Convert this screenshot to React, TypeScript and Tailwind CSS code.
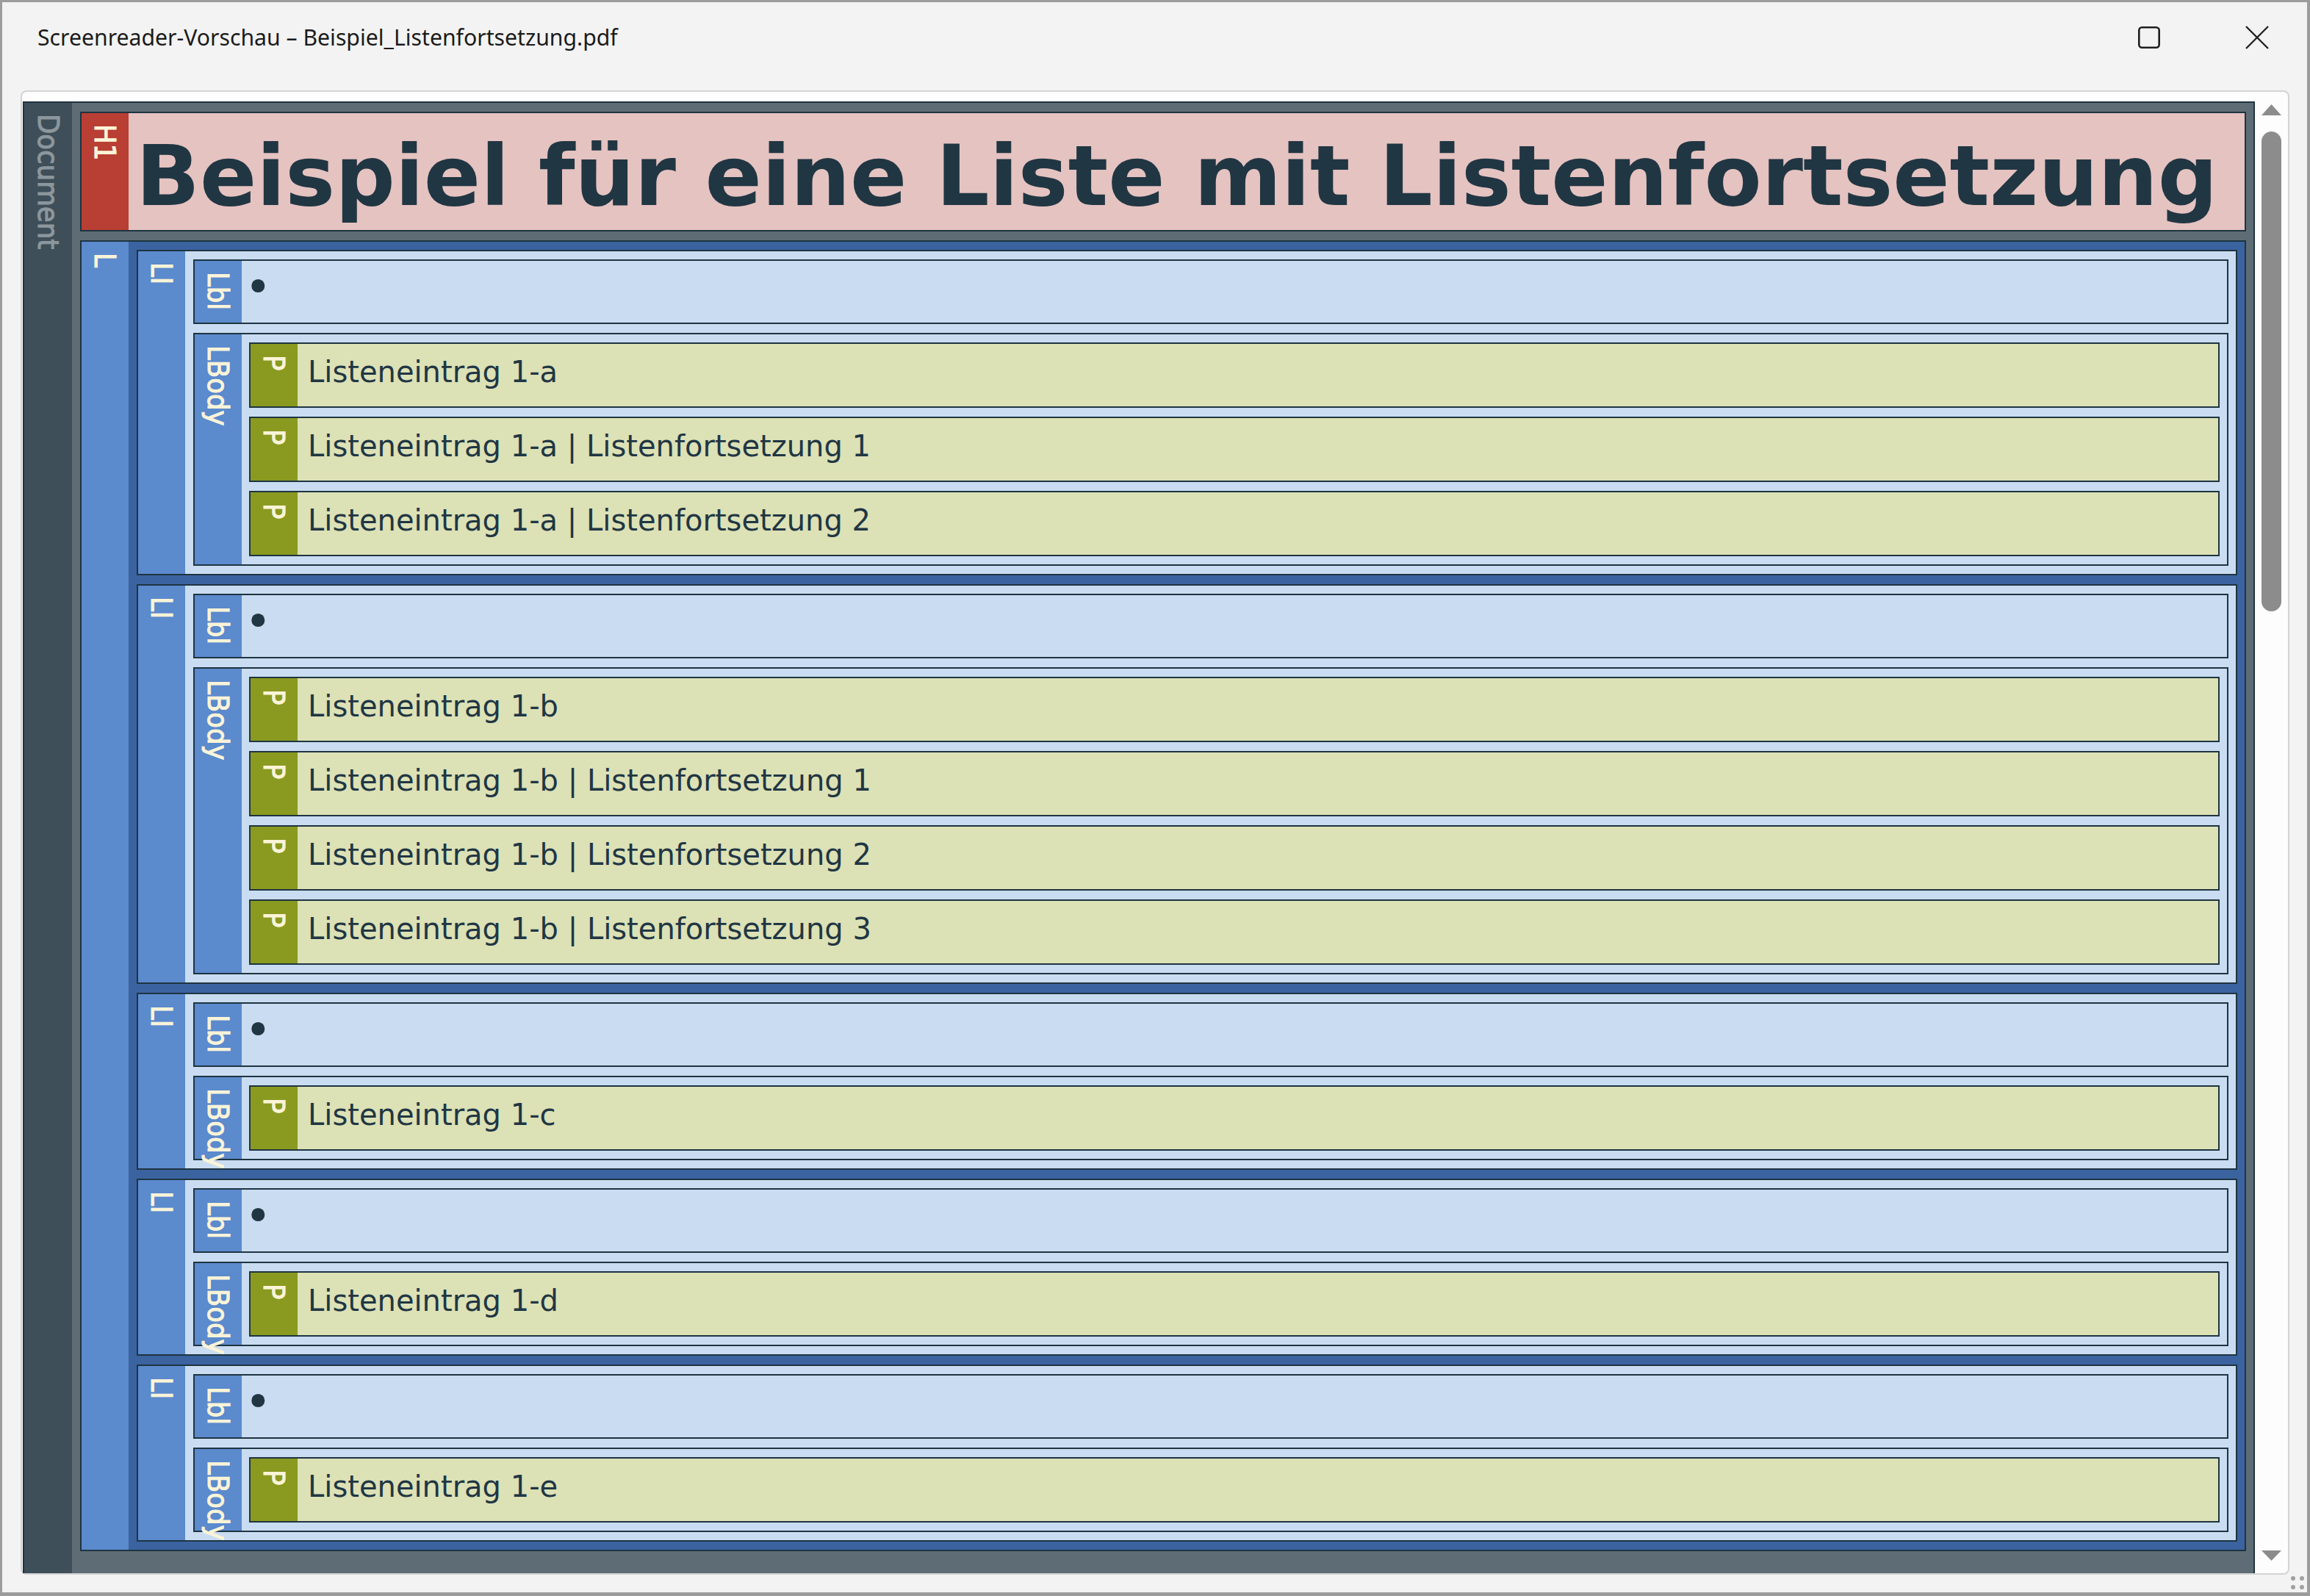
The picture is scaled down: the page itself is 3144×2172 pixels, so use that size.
import React from "react";
import clsx from "clsx";

type NodeProps = {
  label: string;
  labelClass: string;
  boxClass: string;
  bodyClass: string;
  labelText?: string;
  children?: React.ReactNode;
};

// one structure element: coloured tag column on the left, content on the right
function Node({ label, labelClass, boxClass, bodyClass, labelText = "text-[#fbf4d8]", children }: NodeProps) {
  return (
    <div className={clsx("flex border-2 border-[#1e3441]", boxClass)}>
      <div className={clsx("w-[64px] shrink-0 flex justify-center pt-[15px] [contain:size]", labelClass)}>
        <span
          className={clsx(
            "[writing-mode:vertical-rl] whitespace-nowrap text-[39.5px] leading-[46px] [-webkit-text-stroke:1.1px_currentColor] [font-family:'DejaVu_Sans_Condensed','DejaVu_Sans',sans-serif] [font-stretch:condensed]",
            labelText
          )}
        >
          {label}
        </span>
      </div>
      <div className={clsx("flex-1 min-w-0", bodyClass)}>{children}</div>
    </div>
  );
}

const TEXT = "text-[40px] leading-[47px] text-[#213643] whitespace-nowrap [font-family:'DejaVu_Sans','Verdana',sans-serif]";

function Para({ text }: { text: string }) {
  return (
    <Node label="P" labelClass="bg-[#8a9a21]" boxClass="h-[89px] bg-[#dce1b6]" bodyClass={clsx("pl-[14px] pt-[15px]", TEXT)}>
      {text}
    </Node>
  );
}

function ListItem({ paras }: { paras: string[] }) {
  return (
    <Node
      label="LI"
      labelClass="bg-[#5b8acd]"
      boxClass="bg-[#c9dcf1] overflow-hidden"
      bodyClass="flex flex-col gap-[12px] pl-[11px] pr-[10px] py-[11px]"
    >
      <Node
        label="Lbl"
        labelClass="bg-[#5b8acd]"
        boxClass="h-[88px] bg-[#c9dcf1]"
        bodyClass="pl-[4px] pt-[12px] text-[62px] leading-[47px] text-[#213643] [font-family:'DejaVu_Sans','Verdana',sans-serif]"
      >
        •
      </Node>
      <Node
        label="LBody"
        labelClass="bg-[#5b8acd]"
        boxClass="bg-[#c9dcf1]"
        bodyClass="flex flex-col gap-[12px] pl-[10px] pr-[10px] py-[11px]"
      >
        {paras.map((p) => (
          <Para key={p} text={p} />
        ))}
      </Node>
    </Node>
  );
}

const items: string[][] = [
  ["Listeneintrag 1-a", "Listeneintrag 1-a | Listenfortsetzung 1", "Listeneintrag 1-a | Listenfortsetzung 2"],
  [
    "Listeneintrag 1-b",
    "Listeneintrag 1-b | Listenfortsetzung 1",
    "Listeneintrag 1-b | Listenfortsetzung 2",
    "Listeneintrag 1-b | Listenfortsetzung 3",
  ],
  ["Listeneintrag 1-c"],
  ["Listeneintrag 1-d"],
  ["Listeneintrag 1-e"],
];

export default function App() {
  return (
    <div className="w-[3144px] h-[2172px] flex flex-col bg-[#f3f3f3] border-[3px] border-r-[4px] border-b-[5px] border-[#9c9c9c] overflow-hidden">
      {/* title bar */}
      <div className="h-[96px] shrink-0 flex items-center pl-[48px] pr-[52px]">
        <span className="text-[30.2px] text-[#1b1b1b] [font-family:'Noto_Sans','Open_Sans',sans-serif]">
          Screenreader-Vorschau – Beispiel_Listenfortsetzung.pdf
        </span>
        <div className="ml-auto flex items-center gap-[116px]">
          <svg width="30" height="30" viewBox="0 0 30 30">
            <rect x="1.3" y="1.3" width="27.4" height="27.4" rx="4" fill="none" stroke="#1f1f1f" strokeWidth="2.6" />
          </svg>
          <svg width="32" height="32" viewBox="0 0 32 32">
            <path d="M1 1 L31 31 M31 1 L1 31" stroke="#1f1f1f" strokeWidth="2.3" />
          </svg>
        </div>
      </div>

      {/* content panel */}
      <div className="flex-1 min-h-0 mt-[24px] ml-[25px] mr-[24px] flex border-2 border-[#d4d4d4] rounded-[8px] bg-[#fdfdfd]">
        <div className="flex-1 min-w-0 overflow-hidden pt-[13px] pl-px">
          <Node
            label="Document"
            labelClass="bg-[#3f4f59] w-[65px]"
            labelText="text-[#8c979d]"
            boxClass="bg-[#5e6d75] border-b-0"
            bodyClass="flex flex-col gap-[12px] pt-[12px] pl-[11px] pr-[10px] pb-[400px]"
          >
            <Node
              label="H1"
              labelClass="bg-[#b93e34]"
              boxClass="h-[163px] bg-[#e5c3c1]"
              bodyClass="pl-[10px] pt-[19px] text-[114px] leading-[133px] font-bold text-[#213643] whitespace-nowrap overflow-hidden [font-family:'DejaVu_Sans','Verdana',sans-serif]"
            >
              Beispiel für eine Liste mit Listenfortsetzung
            </Node>
            <Node
              label="L"
              labelClass="bg-[#5b8acd]"
              boxClass="bg-[#3b63a0]"
              bodyClass="flex flex-col gap-[12px] pl-[11px] pr-[10px] py-[11px]"
            >
              {items.map((paras, i) => (
                <ListItem key={i} paras={paras} />
              ))}
            </Node>
          </Node>
        </div>

        {/* scrollbar */}
        <div className="w-[45px] shrink-0 flex flex-col items-center pt-[17px] pb-[17px]">
          <svg width="27" height="15" viewBox="0 0 27 15">
            <polygon points="13.5,0 27,15 0,15" fill="#8c8c8c" />
          </svg>
          <div className="mt-[22px] w-[27px] h-[653px] rounded-full bg-[#8c8c8c]" />
          <div className="flex-1" />
          <svg width="27" height="14" viewBox="0 0 27 14">
            <polygon points="0,0 27,0 13.5,14" fill="#8c8c8c" />
          </svg>
        </div>
      </div>

      {/* bottom strip with resize grip */}
      <div className="h-[24px] shrink-0 flex justify-end items-start pt-[2px] pr-[4px]">
        <div className="grid grid-cols-2 gap-[6px]">
          <div className="w-[6px] h-[6px] rounded-full bg-[#a0a0a0]" />
          <div className="w-[6px] h-[6px] rounded-full bg-[#a0a0a0]" />
          <div className="w-[6px] h-[6px] rounded-full bg-[#a0a0a0]" />
          <div className="w-[6px] h-[6px] rounded-full bg-[#a0a0a0]" />
        </div>
      </div>
    </div>
  );
}
